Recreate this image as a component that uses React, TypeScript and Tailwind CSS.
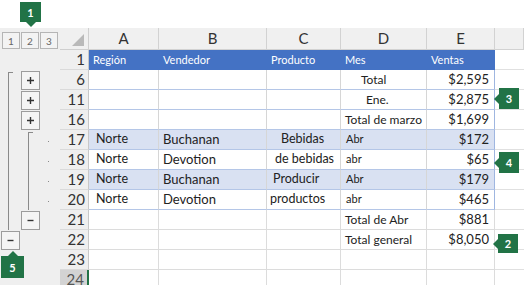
import React from 'react';

type Row = {
  n: string;
  kind: 'header' | 'table' | 'plain';
  band?: boolean;
  a?: string;
  b?: string;
  c?: string;
  cCls?: string;
  d?: string;
  dCls?: string;
  e?: string;
};

const rows: Row[] = [
  { n: '1', kind: 'header', a: 'Región', b: 'Vendedor', c: 'Producto', d: 'Mes', e: 'Ventas' },
  { n: '6', kind: 'table', d: 'Total', dCls: 'pl-[20px] text-[12px]', e: '$2,595' },
  { n: '11', kind: 'table', d: 'Ene.', dCls: 'pl-[25px] text-[12px]', e: '$2,875' },
  { n: '16', kind: 'table', d: 'Total de marzo', dCls: 'pl-[4px] text-[12px]', e: '$1,699' },
  { n: '17', kind: 'table', band: true, a: 'Norte', b: 'Buchanan', c: 'Bebidas', cCls: 'pl-[14px]', d: 'Abr', dCls: 'pl-[5px] text-[11px]', e: '$172' },
  { n: '18', kind: 'table', a: 'Norte', b: 'Devotion', c: 'de bebidas', cCls: 'pl-[8px]', d: 'abr', dCls: 'pl-[5px] text-[11px]', e: '$65' },
  { n: '19', kind: 'table', band: true, a: 'Norte', b: 'Buchanan', c: 'Producir', cCls: 'pl-[6px]', d: 'Abr', dCls: 'pl-[5px] text-[11px]', e: '$179' },
  { n: '20', kind: 'table', a: 'Norte', b: 'Devotion', c: 'productos', cCls: 'pl-[3px]', d: 'abr', dCls: 'pl-[5px] text-[11px]', e: '$465' },
  { n: '21', kind: 'plain', d: 'Total de Abr', dCls: 'pl-[4px] text-[12px]', e: '$881' },
  { n: '22', kind: 'plain', d: 'Total general', dCls: 'pl-[4px] text-[12px]', e: '$8,050' },
  { n: '23', kind: 'plain' },
  { n: '24', kind: 'plain' },
];

function Plus() {
  return (
    <svg width="9" height="9" viewBox="0 0 9 9">
      <path d="M4.5 1v7M1 4.5h7" stroke="#333" strokeWidth="1.4" />
    </svg>
  );
}

function Minus() {
  return (
    <svg width="9" height="9" viewBox="0 0 9 9">
      <path d="M1.5 4.5h6" stroke="#333" strokeWidth="1.4" />
    </svg>
  );
}

function OBtn({ minus }: { minus?: boolean }) {
  return (
    <div className="ml-[1px] mt-[1px] w-[19px] h-[19px] border border-[#9c9c9c] bg-[#f4f4f4] flex items-center justify-center">
      {minus ? <Minus /> : <Plus />}
    </div>
  );
}

function VLine({ tick }: { tick?: boolean }) {
  if (tick) return <div className="ml-[8px] mt-[2px] w-[5px] h-[18px] border-l border-t border-[#8a8a8a]" />;
  return <div className="ml-[8px] w-px h-full bg-[#8a8a8a]" />;
}

function Dot() {
  return <div className="ml-[8px] mt-[11px] w-px h-px bg-[#8a8a8a]" />;
}

function outlineCells(n: string): [React.ReactNode, React.ReactNode, React.ReactNode] {
  switch (n) {
    case '6':
      return [<VLine tick />, <OBtn />, null];
    case '11':
    case '16':
      return [<VLine />, <OBtn />, null];
    case '17':
      return [<VLine />, <VLine tick />, <Dot />];
    case '18':
    case '19':
    case '20':
      return [<VLine />, <VLine />, <Dot />];
    case '21':
      return [<VLine />, <OBtn minus />, null];
    case '22':
      return [<OBtn minus />, null, null];
    default:
      return [null, null, null];
  }
}

function Outline() {
  return (
    <div className="w-[60px] shrink-0 bg-[#efefef] flex flex-col">
      <div className="h-[22px] flex items-start pt-[4px] gap-[1px] pl-[2px]">
        {['1', '2', '3'].map((l) => (
          <div
            key={l}
            className="w-[18px] h-[17px] border border-[#b5b5b5] bg-[#f3f3f3] flex items-center justify-center text-[10px] text-[#666] leading-none"
          >
            {l}
          </div>
        ))}
      </div>
      {rows.map((r) => {
        const [c1, c2, c3] = outlineCells(r.n);
        return (
          <div key={r.n} className="h-[20px] flex">
            <div className="w-[20px] h-full">{c1}</div>
            <div className="w-[20px] h-full">{c2}</div>
            <div className="w-[20px] h-full">{c3}</div>
          </div>
        );
      })}
    </div>
  );
}

function cellBase(r: Row, col: 'a' | 'b' | 'c' | 'd' | 'e' | 'f'): string {
  if (col === 'f') return 'bg-white border-b border-[#e0e0e0]';
  if (r.kind === 'header') return 'bg-[#4472c4] text-white text-[11px] pl-[4px]';
  if (r.kind === 'table') {
    const bg = r.band ? 'bg-[#d9e1f2]' : 'bg-white';
    const right = col === 'e' ? 'border-r border-r-[#9fb6e0]' : 'border-r border-r-[#d6d6d6]';
    return `${bg} border-b border-b-[#b4c6e7] ${right}`;
  }
  return 'bg-white border-b border-r border-[#dcdcdc]';
}

function Grid() {
  const letters = ['A', 'B', 'C', 'D', 'E', ''];
  return (
    <div className="flex-1 grid grid-cols-[29px_70px_108px_74px_86px_68px_1fr] auto-rows-[20px] grid-rows-[22px]">
      <div className="h-[22px] bg-[#f0f0f0] border-b border-r border-[#cfcfcf] flex items-end justify-end pr-[4px] pb-[3px]">
        <svg width="12" height="12" viewBox="0 0 12 12">
          <path d="M12 0V12H0Z" fill="#b9b9b9" />
        </svg>
      </div>
      {letters.map((l, i) => (
        <div
          key={i}
          className="h-[22px] bg-[#f0f0f0] border-b border-r border-[#d2d2d2] flex items-center justify-center text-[15px] text-[#333]"
        >
          {l}
        </div>
      ))}
      {rows.map((r) => (
        <React.Fragment key={r.n}>
          <div
            className={
              r.n === '24'
                ? 'h-[20px] bg-[#d3d3d3] border-b border-[#d8d8d8] border-r-2 border-r-[#217346] flex items-center justify-end pr-[3px] text-[15px] text-[#555]'
                : 'h-[20px] bg-[#efefef] border-b border-[#dadada] border-r border-r-[#c8c8c8] flex items-center justify-end pr-[3px] text-[15px] text-[#333]'
            }
          >
            {r.n}
          </div>
          <div className={`h-[20px] flex items-center text-[#222] ${r.kind === 'header' ? '' : 'pl-[7px] text-[12.5px]'} ${cellBase(r, 'a')}`}>
            {r.a}
          </div>
          <div className={`h-[20px] flex items-center text-[#222] ${r.kind === 'header' ? '' : 'pl-[4px] text-[13px]'} ${cellBase(r, 'b')}`}>
            {r.b}
          </div>
          <div className={`h-[20px] flex items-center text-[#222] ${r.kind === 'header' ? '' : `${r.cCls ?? ''} text-[12.5px]`} ${cellBase(r, 'c')}`}>
            {r.c}
          </div>
          <div className={`h-[20px] flex items-center text-[#222] ${r.kind === 'header' ? '' : r.dCls ?? ''} ${cellBase(r, 'd')}`}>
            {r.d}
          </div>
          <div
            className={`h-[20px] flex items-center text-[#222] ${r.kind === 'header' ? '' : 'justify-end pr-[5px] text-[13px]'} ${cellBase(r, 'e')}`}
          >
            {r.e}
          </div>
          <div className={`h-[20px] ${cellBase(r, 'f')}`} />
        </React.Fragment>
      ))}
    </div>
  );
}

function Box({ label, cls }: { label: string; cls: string }) {
  return (
    <div className={`${cls} bg-[#217346] text-white font-bold text-[11px] flex items-center justify-center leading-none`}>
      {label}
    </div>
  );
}

function LeftCallout({ label, pos, h }: { label: string; pos: string; h: string }) {
  return (
    <div className={`absolute ${pos} flex items-center`}>
      <div className="w-0 h-0 border-y-[5px] border-y-transparent border-r-[5px] border-r-[#217346]" />
      <Box label={label} cls={`w-[20px] ${h}`} />
    </div>
  );
}

export default function App() {
  return (
    <div
      className="relative w-[524px] h-[285px] overflow-hidden bg-white"
      style={{ fontFamily: 'Lato, "Open Sans", sans-serif' }}
    >
      <div className="h-[28px] bg-white" />
      <div className="flex">
        <Outline />
        <Grid />
      </div>

      <div className="absolute left-[20px] top-[2px] flex flex-col items-center">
        <Box label="1" cls="w-[21px] h-[20px]" />
        <div className="w-0 h-0 border-x-[5px] border-x-transparent border-t-[5px] border-t-[#217346]" />
      </div>

      <LeftCallout label="3" pos="left-[494px] top-[88px]" h="h-[21px]" />
      <LeftCallout label="4" pos="left-[494px] top-[152px]" h="h-[21px]" />
      <LeftCallout label="2" pos="left-[493px] top-[234px]" h="h-[19px]" />

      <div className="absolute left-[1px] top-[251px] flex flex-col items-center">
        <div className="w-0 h-0 border-x-[5px] border-x-transparent border-b-[5px] border-b-[#217346]" />
        <Box label="5" cls="w-[23px] h-[22px]" />
      </div>
    </div>
  );
}
